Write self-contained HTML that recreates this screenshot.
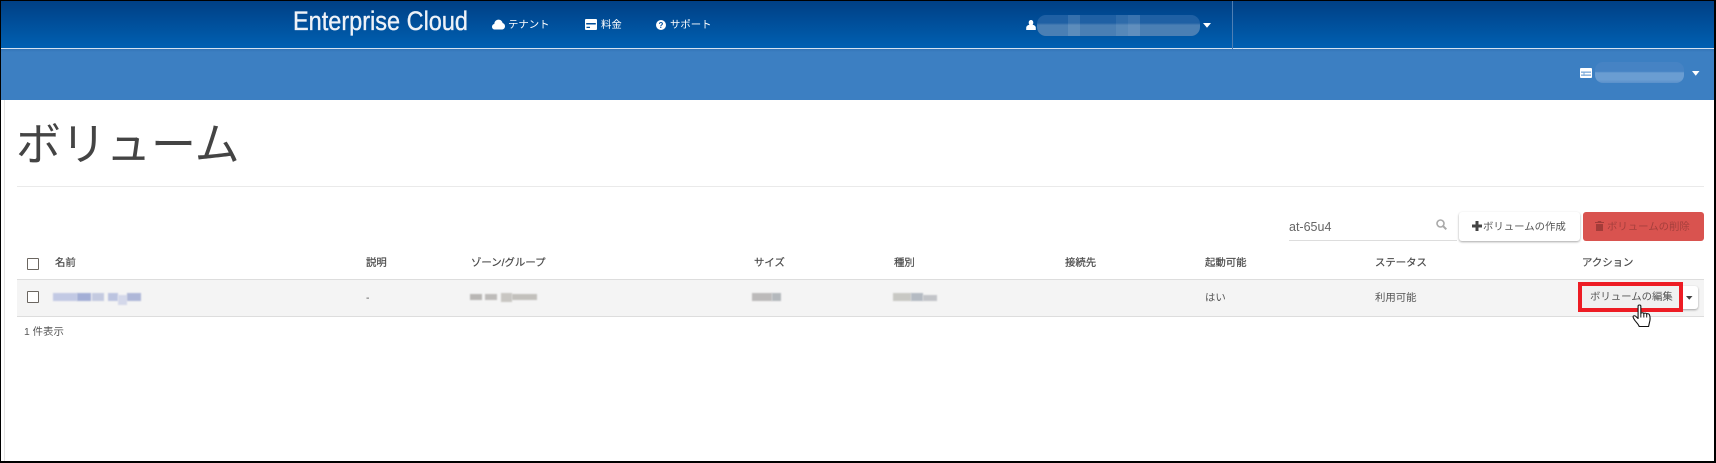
<!DOCTYPE html>
<html lang="ja">
<head>
<meta charset="utf-8">
<title>ボリューム</title>
<style>
html,body{margin:0;padding:0;background:#fff}
body{position:relative;width:1716px;height:463px;overflow:hidden;font-family:"Liberation Sans","Noto Sans CJK JP",sans-serif;color:#555}
.a{position:absolute}
.t{position:absolute;font-size:10.4px;line-height:14px;white-space:nowrap;color:#555}
.h{color:#4a4a4a;font-weight:400;-webkit-text-stroke:.2px #4a4a4a}
.n{position:absolute;top:19px;font-size:10.4px;line-height:14px;color:#fff;white-space:nowrap}
.cb{position:absolute;left:27px;width:10px;height:10px;border:1.3px solid #6b6660;border-radius:1px;background:#fff}
.bl{position:absolute;display:flex}
.bl i{display:block;height:100%}
.px{position:absolute;height:8px;filter:blur(.8px)}
</style>
</head>
<body>
<!-- header -->
<div class="a" style="left:0;top:0;width:1716px;height:48px;background:linear-gradient(#003f84,#0060b2)"></div>
<div class="a" style="left:0;top:48px;width:1716px;height:1px;background:#d5e2f0"></div>
<div class="a" style="left:0;top:49px;width:1716px;height:51px;background:linear-gradient(#3474b6 0,#3c7fc2 3px,#3c7fc2 100%)"></div>
<div class="a" style="left:1232px;top:1px;width:1px;height:48px;background:#4f7fb4"></div>

<svg class="a" style="left:290px;top:6px" width="184" height="32">
<text x="3" y="24" font-family="Liberation Sans" font-size="26.500" fill="#eef2f8" stroke="#eef2f8" stroke-width=".35" textLength="175" lengthAdjust="spacingAndGlyphs">Enterprise Cloud</text>
</svg>

<svg class="a" style="left:492px;top:19px" width="13" height="11" viewBox="0 0 13 11"><path d="M3 10.500C1.200 10.500 0 9.300 0 7.700C0 6.300 1 5.200 2.300 5C2.400 2.500 4.200.6 6.500.6C8.600.6 10.200 2 10.600 4C12 4.400 13 5.700 13 7.200C13 9.100 11.600 10.500 9.800 10.500Z" fill="#fff"/></svg>
<div class="n" style="left:508px">テナント</div>
<svg class="a" style="left:585px;top:19px" width="12" height="11" viewBox="0 0 12 11"><path fill-rule="evenodd" d="M1 0H11A1 1 0 0 1 12 1V10A1 1 0 0 1 11 11H1A1 1 0 0 1 0 10V1A1 1 0 0 1 1 0ZM1.200 4V5.500H10.800V4ZM1.500 7.800V9H5V7.800Z" fill="#fff"/></svg>
<div class="n" style="left:601px">料金</div>
<svg class="a" style="left:656px;top:20px" width="10" height="10" viewBox="0 0 10 10"><circle cx="5" cy="5" r="5" fill="#fff"/><text x="5" y="8" font-size="8" font-weight="bold" text-anchor="middle" font-family="Liberation Sans" fill="#0052a0">?</text></svg>
<div class="n" style="left:670px">サポート</div>

<svg class="a" style="left:1026px;top:20px" width="10" height="10" viewBox="0 0 10 10"><path d="M5 0C6.500 0 7.300 1.200 7.300 2.600C7.300 3.500 7 4.200 6.600 4.700C8.500 5 9.600 6 9.800 7.500V10H.2V7.500C.4 6 1.500 5 3.400 4.700C3 4.200 2.700 3.500 2.700 2.600C2.700 1.200 3.500 0 5 0Z" fill="#fff"/></svg>
<div class="bl" style="left:1037px;top:15px;width:163px;height:21px;border-radius:9px;overflow:hidden;background:linear-gradient(#1f60a4 0,#1f60a4 38%,#4a7fb4 48%,#4a7fb4 100%)">
<i style="width:31px"></i><i style="width:12px;background:rgba(255,255,255,.1)"></i><i style="width:36px"></i><i style="width:12px;background:rgba(255,255,255,.07)"></i><i style="width:12px;background:rgba(255,255,255,.12)"></i></div>
<svg class="a" style="left:1203px;top:23px" width="9" height="5"><path d="M0 0H8L4 4.800Z" fill="#fff"/></svg>

<svg class="a" style="left:1580px;top:68px" width="12" height="10" viewBox="0 0 12 10"><rect width="12" height="10" rx="1" fill="#fff"/><rect x="1" y="3.500" width="10" height="1.300" fill="#79a8d8"/><rect x="1" y="6.500" width="10" height="1.300" fill="#79a8d8"/><rect x="3.500" y="3.500" width="1" height="4.300" fill="#79a8d8"/></svg>
<div class="bl" style="left:1595px;top:62px;width:89px;height:21px;border-radius:8px;overflow:hidden;background:linear-gradient(#4683c4 0,#4683c4 45%,#6a9dd2 52%,#6a9dd2 85%,#5a90ca 100%)"></div>
<svg class="a" style="left:1692px;top:71px" width="8" height="5"><path d="M0 0H7.500L3.750 4.800Z" fill="#fff"/></svg>

<!-- title -->
<div class="a" style="left:16px;top:110px;font-size:45px;line-height:62px;color:#444;white-space:nowrap;font-family:'Noto Sans CJK JP','Liberation Sans',sans-serif;font-weight:400">ボリューム</div>
<div class="a" style="left:17px;top:186px;width:1687px;height:1px;background:#eaeaea"></div>

<!-- toolbar -->
<div class="a" style="left:1289px;top:219px;font-size:12.500px;line-height:16px;color:#666">at-65u4</div>
<div class="a" style="left:1289px;top:240px;width:168px;height:1px;background:#ddd"></div>
<svg class="a" style="left:1436px;top:219px" width="11" height="11" viewBox="0 0 11 11"><circle cx="4.500" cy="4.500" r="3.500" fill="none" stroke="#aaa" stroke-width="1.600"/><path d="M7 7L10.300 10.300" stroke="#aaa" stroke-width="2"/></svg>

<div class="a" style="left:1459px;top:212px;width:121px;height:29px;background:#fff;border-radius:3px;box-shadow:0 1px 2px rgba(0,0,0,.35)"></div>
<svg class="a" style="left:1472px;top:221px" width="10" height="10"><path d="M3.500 0H6.500V3.500H10V6.500H6.500V10H3.500V6.500H0V3.500H3.500Z" fill="#444"/></svg>
<div class="t" style="left:1483px;top:221px;color:#555">ボリュームの作成</div>

<div class="a" style="left:1583px;top:212px;width:121px;height:29px;background:#d9534f;border-radius:3px"></div>
<svg class="a" style="left:1595px;top:221px" width="9" height="10" viewBox="0 0 9 10"><path d="M3 0H6L6.500 1H9V2H0V1H2.500ZM1 3H8V10H1Z" fill="#a33c39"/></svg>
<div class="t" style="left:1607px;top:221px;color:#a53f3c">ボリュームの削除</div>

<!-- table header -->
<div class="cb" style="top:258px"></div>
<div class="t h" style="left:55px;top:257px">名前</div>
<div class="t h" style="left:366px;top:257px">説明</div>
<div class="t h" style="left:471px;top:257px">ゾーン/グループ</div>
<div class="t h" style="left:754px;top:257px">サイズ</div>
<div class="t h" style="left:894px;top:257px">種別</div>
<div class="t h" style="left:1065px;top:257px">接続先</div>
<div class="t h" style="left:1205px;top:257px">起動可能</div>
<div class="t h" style="left:1375px;top:257px">ステータス</div>
<div class="t h" style="left:1582px;top:257px">アクション</div>

<!-- row -->
<div class="a" style="left:17px;top:279px;width:1687px;height:36px;background:#f4f4f4;border-top:1px solid #ddd;border-bottom:1px solid #ddd"></div>
<div class="cb" style="top:291px"></div>

<div class="px" style="left:53px;top:293px;width:24px;background:#c2c9e4"></div>
<div class="px" style="left:77px;top:293px;width:14px;background:#a3aed6"></div>
<div class="px" style="left:92px;top:293px;width:12px;background:#c4cae0"></div>
<div class="px" style="left:108px;top:293px;width:10px;background:#bcc4e0"></div>
<div class="px" style="left:118px;top:295px;width:9px;height:10px;background:#d4d8ea"></div>
<div class="px" style="left:127px;top:293px;width:14px;background:#aeb7d8"></div>

<div class="t" style="left:366px;top:292px">-</div>

<div class="px" style="left:470px;top:294px;width:12px;height:6px;background:#b8b6b4"></div>
<div class="px" style="left:485px;top:294px;width:12px;height:6px;background:#bdbbb9"></div>
<div class="px" style="left:501px;top:293px;width:11px;height:9px;background:#c8c6c2"></div>
<div class="px" style="left:512px;top:294px;width:25px;height:6px;background:#c2c0bc"></div>

<div class="px" style="left:752px;top:293px;width:20px;height:8px;background:#bcbaba"></div>
<div class="px" style="left:772px;top:293px;width:9px;height:8px;background:#b4b8bc"></div>

<div class="px" style="left:893px;top:293px;width:18px;height:8px;background:#c8c8c4"></div>
<div class="px" style="left:911px;top:293px;width:12px;height:8px;background:#b4bac2"></div>
<div class="px" style="left:923px;top:295px;width:14px;height:6px;background:#c2c4c8"></div>

<div class="t" style="left:1205px;top:292px">はい</div>
<div class="t" style="left:1375px;top:292px">利用可能</div>

<!-- action button -->
<div class="a" style="left:1680px;top:286px;width:18px;height:23px;background:#fff;border-radius:0 3px 3px 0;box-shadow:0 1px 2px rgba(0,0,0,.35)"></div>
<svg class="a" style="left:1686px;top:296px" width="7" height="4"><path d="M0 0H6.500L3.250 3.800Z" fill="#444"/></svg>
<div class="a" style="left:1578px;top:282px;width:97px;height:22px;border:4.500px solid #ed1c24;background:#f0f0f0"></div>
<div class="t" style="left:1590px;top:291px;color:#555">ボリュームの編集</div>

<!-- hand cursor -->
<svg class="a" style="left:1632px;top:304px" width="21" height="24" viewBox="0 0 19 24" preserveAspectRatio="none"><path d="M5.500 2.200C5.500 .6 8 .6 8 2.200V9.500C8.300 8.500 10.500 8.500 10.700 9.700C11 8.900 13 8.900 13.300 10.100C13.700 9.400 15.500 9.600 15.800 10.800C16.500 13 16.500 16 15.800 18.500L15 22.500H6.500C6 20.500 4.500 19 3 17C2 15.500 1.200 14.200 1 13C.8 11.800 2.300 11.300 3.200 12.200L5.500 14.500Z" fill="#fff" stroke="#111" stroke-width="1" stroke-linejoin="round"/><path d="M8 9.500V13.500M10.700 9.700V13.500M13.300 10.100V13.500" stroke="#111" stroke-width=".9" fill="none"/></svg>

<div class="t" style="left:24px;top:326px">1 件表示</div>

<!-- screenshot frame -->
<div class="a" style="left:4px;top:100px;width:1px;height:361px;background:#e4e4e4"></div>
<div class="a" style="left:0;top:0;width:1716px;height:1px;background:#000"></div>
<div class="a" style="left:0;top:0;width:1px;height:463px;background:#000"></div>
<div class="a" style="left:1714px;top:0;width:2px;height:463px;background:#000"></div>
<div class="a" style="left:0;top:461px;width:1716px;height:2px;background:#000"></div>
</body>
</html>
